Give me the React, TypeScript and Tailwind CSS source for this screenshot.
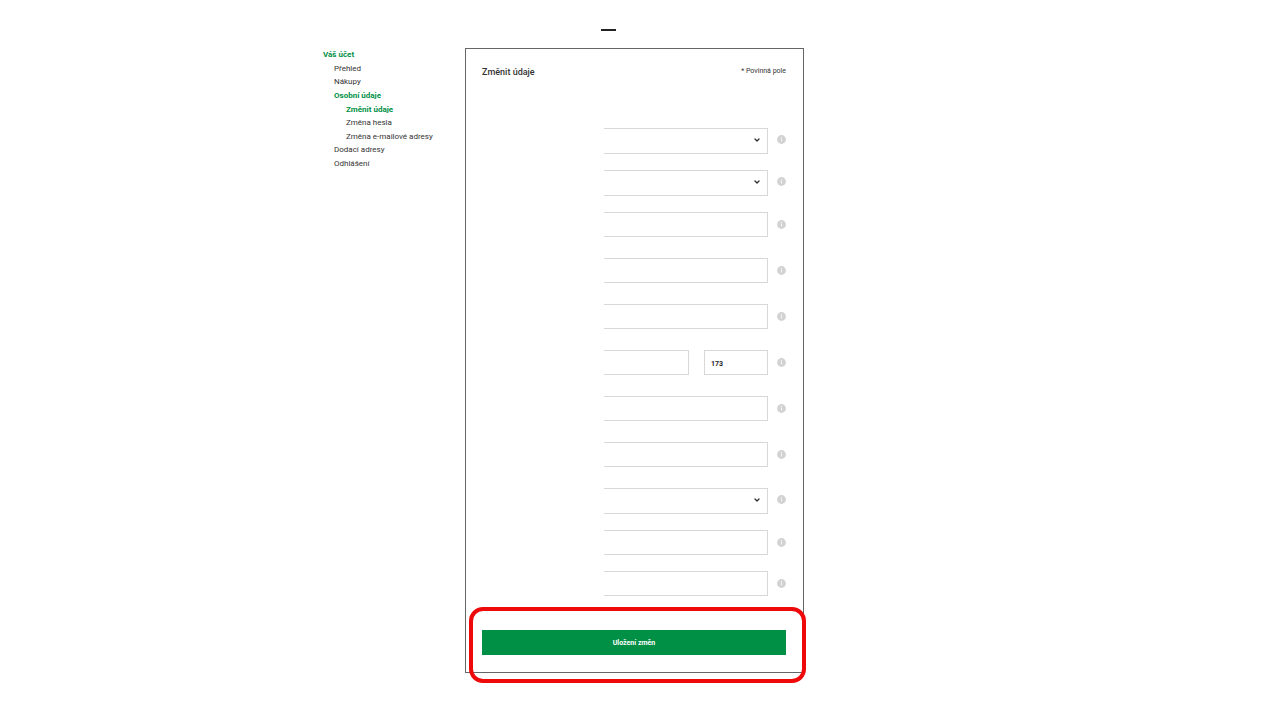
import { ChevronDown } from "lucide-react";

type Field = {
  id: string;
  label: string;
  kind: "select" | "text" | "address";
  tight?: boolean;
};

const links = [
  { label: "Váš účet", className: "font-bold text-[#009045]" },
  { label: "Přehled", className: "pl-[11px]" },
  { label: "Nákupy", className: "pl-[11px]" },
  { label: "Osobní údaje", className: "pl-[11px] font-bold text-[#009045]" },
  { label: "Změnit údaje", className: "pl-[23px] font-bold text-[#009045]" },
  { label: "Změna hesla", className: "pl-[23px]" },
  { label: "Změna e-mailové adresy", className: "pl-[23px]" },
  { label: "Dodací adresy", className: "pl-[11px]" },
  { label: "Odhlášení", className: "pl-[11px]" },
];

const fields: Field[] = [
  { id: "typ", label: "Typ účtu", kind: "select" },
  { id: "osloveni", label: "Oslovení", kind: "select" },
  { id: "jmeno", label: "Jméno", kind: "text" },
  { id: "prijmeni", label: "Příjmení", kind: "text" },
  { id: "firma", label: "Firma", kind: "text" },
  { id: "ulice", label: "Ulice", kind: "address" },
  { id: "psc", label: "PSČ", kind: "text" },
  { id: "mesto", label: "Město", kind: "text" },
  { id: "zeme", label: "Země", kind: "select" },
  { id: "telefon", label: "Telefon", kind: "text", tight: true },
  { id: "mobil", label: "Mobil", kind: "text", tight: true },
];

const inputClass = "block h-[25px] w-full min-w-0 border border-[#d8d8d8] bg-white px-[6px] pt-[2px] text-[7px] outline-none";

function InfoIcon() {
  return (
    <svg viewBox="0 0 9 9" className="h-[9px] w-[9px]" aria-hidden="true">
      <circle cx="4.5" cy="4.5" r="4.4" fill="#d2d2d2" />
      <rect x="4" y="1.8" width="1" height="1.1" fill="#f4f4f4" />
      <path d="M3.6 3.6H5v3H4v-2.4h-.4z" fill="#f4f4f4" />
    </svg>
  );
}

function FieldRow({ field }: { field: Field }) {
  const isSelect = field.kind === "select";

  return (
    <div className={`flex items-start ${isSelect || field.tight ? "mb-4" : "mb-[21px]"}`}>
      <div className="ml-[122px] flex-1">
        {field.kind === "select" && (
          <div className="relative">
            <select
              id={field.id}
              aria-label={field.label}
              className="block h-[26px] w-full appearance-none border border-l-0 border-[#d8d8d8] bg-white px-[6px] text-[7px] outline-none"
            />
            <ChevronDown
              className="pointer-events-none absolute right-[7px] top-2 h-2 w-2 text-[#333]"
              strokeWidth={4}
            />
          </div>
        )}
        {field.kind === "text" && (
          <input id={field.id} aria-label={field.label} className={`${inputClass} border-l-0`} />
        )}
        {field.kind === "address" && (
          <div className="flex gap-[15px]">
            <input id={field.id} aria-label={field.label} className={`${inputClass} flex-1 border-l-0`} />
            <div className="w-16 shrink-0">
              <input
                aria-label="Číslo popisné"
                defaultValue="173"
                className={`${inputClass} font-bold text-[#222]`}
              />
            </div>
          </div>
        )}
      </div>
      <button
        type="button"
        aria-label={`Nápověda: ${field.label}`}
        className={`ml-[9px] ${isSelect ? "mt-[7px]" : "mt-2"}`}
      >
        <InfoIcon />
      </button>
    </div>
  );
}

export default function App() {
  return (
    <div className="min-h-screen bg-white pl-[323px] font-[family-name:Roboto,sans-serif] text-[8px] text-[#333]">
      <div className="flex items-start">
        {/* Account menu */}
        <nav className="mt-12 w-[142px] shrink-0">
          <ul className="flex h-[122px] flex-col justify-between leading-[13px]">
            {links.map((link) => (
              <li key={link.label} className={link.className}>
                <a href="#" className="block">{link.label}</a>
              </li>
            ))}
          </ul>
        </nav>

        <main className="max-w-[339px] flex-1">
          <div className="ml-[136px] mt-[29px] h-[2px] w-[15px] bg-[#222]" />

          <form className="mt-[17px] border border-[#666] pb-[17px] pl-4 pr-[17px]" onSubmit={(e) => e.preventDefault()}>
            <div className="flex items-start justify-between pt-[15px]">
              <h1 className="text-[9px] font-medium leading-[17px] text-[#333]">Změnit údaje</h1>
              <p className="text-[7px] leading-[14px]">* Povinná pole</p>
            </div>

            <div className="mt-[47px]">
              {fields.map((field) => (
                <FieldRow key={field.id} field={field} />
              ))}
            </div>

            {/* Save button with highlight */}
            <div className="relative mt-[34px]">
              <button type="submit" className="block h-[25px] w-full bg-[#009045] pt-[2px] text-[7px] font-bold text-white">
                Uložení změn
              </button>
              <div className="pointer-events-none absolute -bottom-7 -left-[13px] -right-5 -top-[23px] rounded-[14px] border-4 border-[#ee0a0a]" />
            </div>
          </form>
        </main>
      </div>
    </div>
  );
}
